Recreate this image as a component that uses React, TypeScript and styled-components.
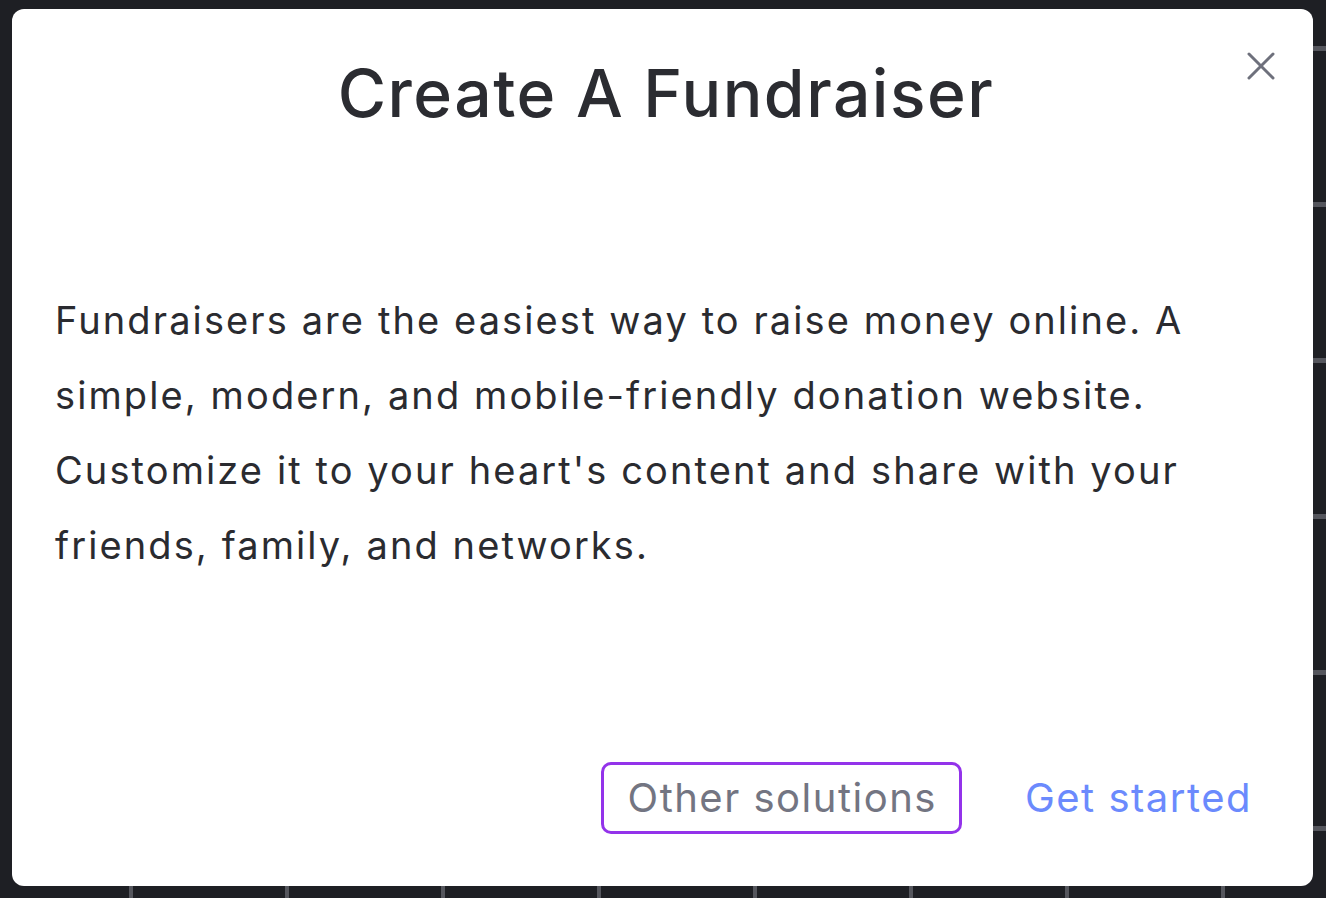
import React from "react";
import styled, { createGlobalStyle } from "styled-components";

const Global = createGlobalStyle`
  html, body {
    margin: 0;
    padding: 0;
    background: #1e1f24;
  }
  body {
    font-family: Inter, "Noto Sans", sans-serif;
  }
`;

const Page = styled.div`
  display: grid;
  grid-template-columns: 12px 1301px 13px;
  grid-template-rows: 9px 877px 12px;
  width: 1326px;
  height: 898px;
  background: #1e1f24;
`;

const RightTicks = styled.div`
  grid-column: 3;
  grid-row: 2;
  background: repeating-linear-gradient(
    to bottom,
    transparent 0 37px,
    #55565d 37px 42px,
    transparent 42px 156px
  );
`;

const BottomTicks = styled.div`
  grid-column: 2;
  grid-row: 3;
  background: repeating-linear-gradient(
    to right,
    transparent 0 117px,
    #55565d 117px 121px,
    transparent 121px 156px
  );
`;

const Modal = styled.section`
  grid-column: 2;
  grid-row: 2;
  position: relative;
  display: flex;
  flex-direction: column;
  background: #ffffff;
  border-radius: 12px;
  padding: 43px 36px 52px 43px;
  box-sizing: border-box;
`;

const Title = styled.h1`
  margin: 0;
  text-align: center;
  font-size: 66px;
  line-height: 82px;
  font-weight: 500;
  letter-spacing: 1.5px;
  color: #2b2c31;
`;

const Close = styled.button`
  position: absolute;
  top: 43px;
  right: 38px;
  width: 28px;
  height: 28px;
  padding: 0;
  border: none;
  background: none;
  cursor: pointer;
  display: flex;
  align-items: center;
  justify-content: center;
`;

const Text = styled.p`
  margin: 149px 0 0 0;
  font-size: 38px;
  line-height: 75px;
  font-weight: 400;
  letter-spacing: 2.1px;
  color: #2a2b30;
  max-width: 1180px;
`;

const Footer = styled.div`
  margin-top: auto;
  display: flex;
  justify-content: flex-end;
  align-items: center;
  gap: 36px;
`;

const Action = styled.button<{ $outlined?: boolean; $color: string }>`
  font-family: Inter, "Noto Sans", sans-serif;
  font-size: 40px;
  line-height: 66px;
  font-weight: 400;
  letter-spacing: 1.5px;
  color: ${(p) => p.$color};
  background: none;
  border: 3px solid ${(p) => (p.$outlined ? "#9333ea" : "transparent")};
  border-radius: 10px;
  padding: 0 22px 0 24px;
  cursor: pointer;
`;

const App = () => {
  return (
    <>
      <Global />
      <Page>
        <Modal>
          <Title>Create A Fundraiser</Title>
          <Close aria-label="Close">
            <svg width="28" height="28" viewBox="0 0 28 28">
              <path
                d="M2 2 L26 26 M26 2 L2 26"
                stroke="#6e707c"
                strokeWidth="3"
                strokeLinecap="round"
              />
            </svg>
          </Close>
          <Text>
            Fundraisers are the easiest way to raise money online. A simple,
            modern, and mobile-friendly donation website. Customize it to your
            heart's content and share with your friends, family, and networks.
          </Text>
          <Footer>
            <Action $outlined $color="#737582">Other solutions</Action>
            <Action $color="#6b8afd">Get started</Action>
          </Footer>
        </Modal>
        <RightTicks />
        <BottomTicks />
      </Page>
    </>
  );
};

export default App;
